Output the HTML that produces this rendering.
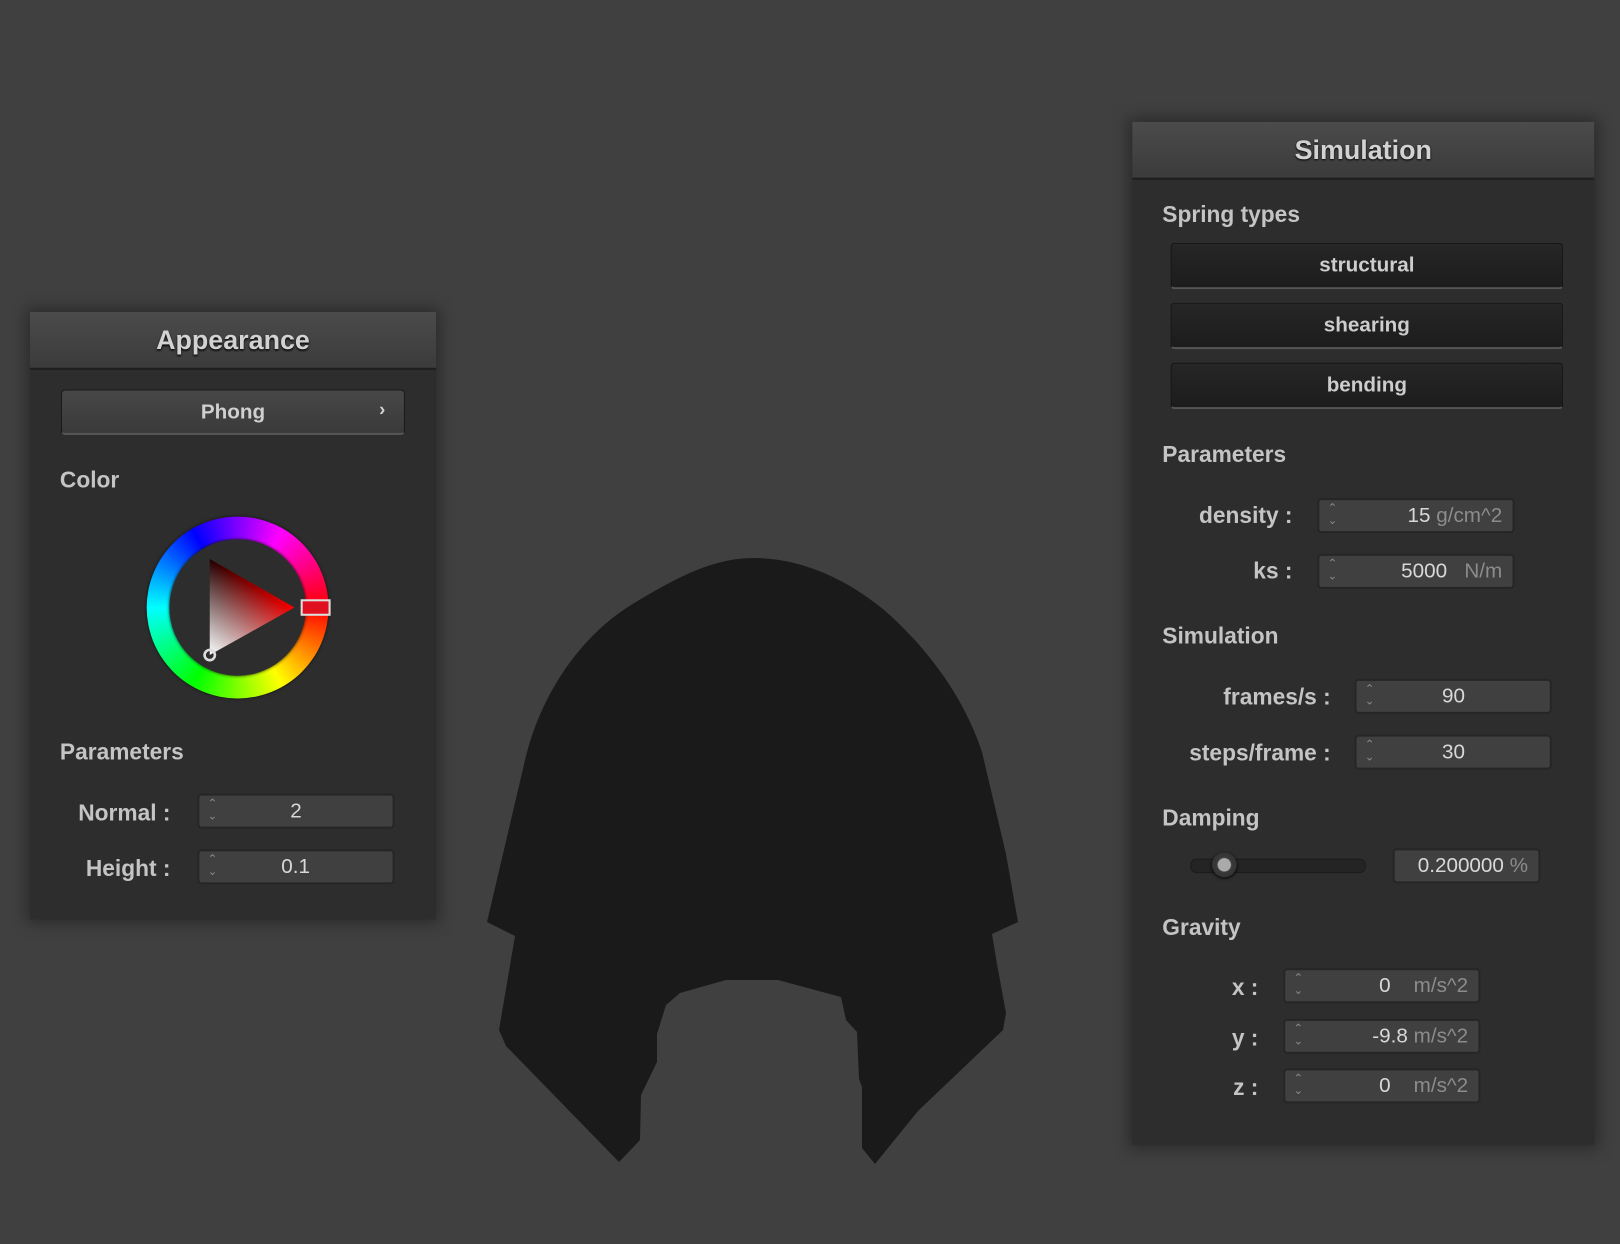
<!DOCTYPE html>
<html><head><meta charset="utf-8"><style>
html,body{margin:0;padding:0;width:1620px;height:1244px;overflow:hidden;background:#404040;font-family:"Liberation Sans",sans-serif;}
#cloth{position:absolute;left:0;top:0}
#w{position:absolute;left:0;top:0;width:1568px;height:1204px;transform-origin:0 0;transform:scale(1.03316,1.03322);}
.panel{position:absolute;background:#2d2d2d;box-shadow:0 0 14px 4px rgba(0,0,0,0.35);}
.hdr{position:absolute;left:0;right:0;top:0;height:54px;background:linear-gradient(#4b4b4b,#3b3b3b);border-bottom:2px solid #1e1e1e;color:#d2d2d2;font-weight:bold;font-size:26px;text-align:center;line-height:54px;text-shadow:0 1px 2px #000;}
.lbl{position:absolute;color:#c4c4c4;font-weight:bold;font-size:22px;white-space:nowrap;}
.rl{position:absolute;color:#c4c4c4;font-weight:bold;font-size:22px;text-align:right;white-space:nowrap;}
.inp{position:absolute;height:34px;background:#404040;border:2px solid #262626;border-radius:4px;box-sizing:border-box;color:#d8d8d8;font-size:20px;line-height:31px;}
.inp .ar{position:absolute;left:8px;top:2px;color:#8a8a8a;font-size:11px;line-height:12px;}
.inp .v{position:absolute;right:10px;top:0;white-space:nowrap}
.u{color:#8c8c8c}
.btn{position:absolute;left:37px;width:380px;height:45px;box-sizing:border-box;background:linear-gradient(#262626,#1c1c1c);border:1px solid #151515;border-bottom:2px solid #555;border-radius:4px;color:#cdcdcd;font-weight:bold;font-size:20px;text-align:center;line-height:43px;}
</style></head><body>
<svg id="cloth" width="1620" height="1244"><path fill="#1a1a1a" d="M487 922 L526 756 C540 700 575 640 631 605 C680 575 715 558 754 558 C800 558 845 578 883 609 C930 650 965 700 982 752 L1006 854 L1018 922 L992 934 L997 964 L1006 1013 L1003 1030 L918 1111 L875 1164 L862 1148 L862 1087 L859 1079 L857 1032 L846 1020 L841 997 L778 980 L726 980 L680 993 L666 1005 L657 1034 L657 1062 L641 1095 L640 1140 L619 1162 L506 1046 L499 1030 L515 936 Z"/></svg>
<div id="w">
<div class="panel" style="left:29px;top:302px;width:393px;height:588px;">
 <div class="hdr">Appearance</div>
 <div style="position:absolute;left:30px;top:75px;width:333px;height:44px;box-sizing:border-box;background:linear-gradient(#474747,#3a3a3a);border:1px solid #1a1a1a;border-bottom:2px solid #555;border-radius:4px;color:#d0d0d0;font-weight:bold;font-size:20px;text-align:center;line-height:42px;">Phong<span style="position:absolute;right:18px;top:-3px;font-size:18px;">›</span></div>
 <div class="lbl" style="left:29px;top:150px;">Color</div>
 <div style="position:absolute;left:113px;top:198px;width:176px;height:176px;border-radius:50%;background:conic-gradient(from 90deg,#f00,#ff0,#0f0,#0ff,#00f,#f0f,#f00);box-shadow:0 0 3px #111;"></div>
 <div style="position:absolute;left:135px;top:220px;width:132px;height:132px;border-radius:50%;background:#2d2d2d;box-shadow:0 0 3px #111;"></div>
 <svg style="position:absolute;left:0;top:0" width="393" height="588">
  <defs>
   <linearGradient id="g1" x1="174" y1="286" x2="256" y2="286" gradientUnits="userSpaceOnUse"><stop offset="0" stop-color="#200" /><stop offset="1" stop-color="#f00"/></linearGradient>
   <linearGradient id="g2" x1="174" y1="332" x2="215" y2="265" gradientUnits="userSpaceOnUse"><stop offset="0" stop-color="#fff" stop-opacity="1"/><stop offset="1" stop-color="#fff" stop-opacity="0"/></linearGradient>
  </defs>
  <polygon points="174,239 256,286 174,332" fill="url(#g1)"/>
  <polygon points="174,239 256,286 174,332" fill="url(#g2)"/>
  <rect x="263" y="279" width="27" height="14" fill="#e01020" stroke="#ddd" stroke-width="2"/>
  <circle cx="174" cy="332" r="5" fill="none" stroke="#ddd" stroke-width="2.5"/>
 </svg>
 <div class="lbl" style="left:29px;top:413px;">Parameters</div>
 <div class="rl" style="right:257px;top:472px;">Normal :</div>
 <div class="inp" style="left:162px;top:466px;width:191px;"><div class="ar">⌃<br>⌄</div><div class="v" style="right:88px">2</div></div>
 <div class="rl" style="right:257px;top:526px;">Height :</div>
 <div class="inp" style="left:162px;top:520px;width:191px;"><div class="ar">⌃<br>⌄</div><div class="v" style="right:80px">0.1</div></div>
</div>

<div class="panel" style="left:1096px;top:118px;width:447px;height:990px;">
 <div class="hdr">Simulation</div>
 <div class="lbl" style="left:29px;top:77px;">Spring types</div>
 <div class="btn" style="top:117px;">structural</div>
 <div class="btn" style="top:175px;">shearing</div>
 <div class="btn" style="top:233px;">bending</div>
 <div class="lbl" style="left:29px;top:309px;">Parameters</div>
 <div class="rl" style="right:292px;top:368px;">density :</div>
 <div class="inp" style="left:179px;top:364px;width:191px;"><div class="ar">⌃<br>⌄</div><div class="v">15 <span class="u">g/cm^2</span></div></div>
 <div class="rl" style="right:292px;top:422px;">ks :</div>
 <div class="inp" style="left:179px;top:418px;width:191px;"><div class="ar">⌃<br>⌄</div><div class="v">5000&nbsp;&nbsp;&nbsp;<span class="u">N/m</span></div></div>
 <div class="lbl" style="left:29px;top:485px;">Simulation</div>
 <div class="rl" style="right:255px;top:544px;">frames/s :</div>
 <div class="inp" style="left:215px;top:539px;width:191px;"><div class="ar">⌃<br>⌄</div><div class="v" style="right:82px">90</div></div>
 <div class="rl" style="right:255px;top:598px;">steps/frame :</div>
 <div class="inp" style="left:215px;top:593px;width:191px;"><div class="ar">⌃<br>⌄</div><div class="v" style="right:82px">30</div></div>
 <div class="lbl" style="left:29px;top:661px;">Damping</div>
 <div style="position:absolute;left:56px;top:713px;width:168px;height:12px;background:#242424;border-radius:6px;border:1px solid #1c1c1c;"></div>
 <div style="position:absolute;left:77px;top:707px;width:24px;height:24px;border-radius:50%;background:radial-gradient(circle,#aaa 0,#aaa 6px,#3a3a3a 7px,#333 12px);box-shadow:0 1px 3px #000;"></div>
 <div class="inp" style="left:252px;top:703px;width:143px;"><div class="v">0.200000 <span class="u">%</span></div></div>
 <div class="lbl" style="left:29px;top:767px;">Gravity</div>
 <div class="rl" style="right:325px;top:825px;">x :</div>
 <div class="inp" style="left:146px;top:819px;width:191px;"><div class="ar">⌃<br>⌄</div><div class="v">0&nbsp;&nbsp;&nbsp;&nbsp;<span class="u">m/s^2</span></div></div>
 <div class="rl" style="right:325px;top:874px;">y :</div>
 <div class="inp" style="left:146px;top:868px;width:191px;"><div class="ar">⌃<br>⌄</div><div class="v">-9.8 <span class="u">m/s^2</span></div></div>
 <div class="rl" style="right:325px;top:922px;">z :</div>
 <div class="inp" style="left:146px;top:916px;width:191px;"><div class="ar">⌃<br>⌄</div><div class="v">0&nbsp;&nbsp;&nbsp;&nbsp;<span class="u">m/s^2</span></div></div>
</div>
</div>
</body></html>
